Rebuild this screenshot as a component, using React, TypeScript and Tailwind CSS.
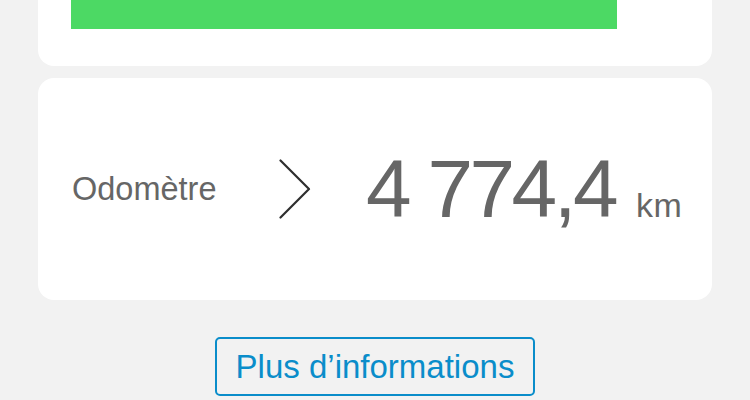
import React from "react";

export default function App() {
  return (
    <div
      className="w-[750px] h-[400px] overflow-hidden bg-[#f2f2f2] px-[38px]"
      style={{ fontFamily: '"Liberation Sans", Arial, sans-serif' }}
    >
      <div className="h-[66px] bg-white rounded-b-[16px] pl-[33px]">
        <div className="w-[546px] h-[29px] bg-[#4cd964]" />
      </div>
      <div className="mt-[12px] h-[222px] bg-white rounded-[16px] flex items-center pl-[34px]">
        <div className="w-[207px] text-[32.5px] text-[#666666] leading-none">Odomètre</div>
        <div className="w-[87px] flex items-center">
          <svg width="32" height="60" viewBox="0 0 32 60" fill="none">
            <path d="M1.5 1.5 L30 30 L1.5 58.5" stroke="#2e2e2e" strokeWidth="2.2" strokeLinecap="round" strokeLinejoin="round" />
          </svg>
        </div>
        <div className="flex items-baseline">
          <span className="text-[82px] leading-none tracking-[-3.5px] text-[#666666]">4 774,4</span>
          <span className="ml-[21px] text-[34px] leading-none tracking-[0.5px] text-[#666666]">km</span>
        </div>
      </div>
      <div className="flex justify-center mt-[37px]">
        <button className="w-[320px] h-[59px] border-2 border-[#0a8dca] rounded-[5px] text-[33px] text-[#0a8dca] leading-none">
          Plus d’informations
        </button>
      </div>
    </div>
  );
}
